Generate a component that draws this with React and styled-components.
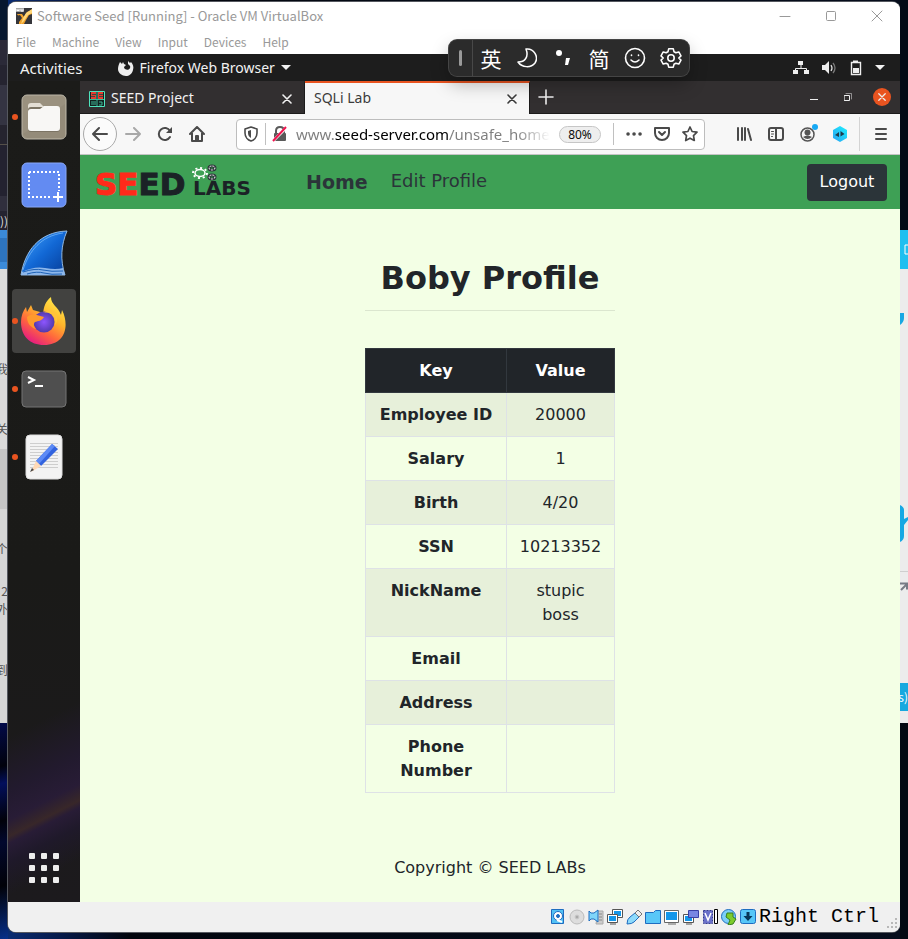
import React from "react";
import styled, { createGlobalStyle } from "styled-components";

const ui = '"Noto Sans", "Open Sans", sans-serif';
const cjk = '"Noto Sans CJK SC", sans-serif';

const Global = createGlobalStyle`
  * { box-sizing: border-box; }
  body { margin: 0; background: #030814; font-family: ${ui}; }
  button { border: 0; padding: 0; margin: 0; background: none; color: inherit; font: inherit; cursor: pointer; }
  svg { display: block; flex: none; }
`;

/* ---------- desktop behind the window ---------- */

const Desktop = styled.div`
  display: grid;
  grid-template-columns: 8px minmax(0, 1fr) 8px;
  min-height: 100vh;
  overflow: hidden;
  background: linear-gradient(90deg, #0b2f78 0, #061a4a 60px, #02050d 130px, #040b18 60%, #060d1c);
`;

const Strip = styled.div`
  display: flex;
  flex-direction: column;
  overflow: hidden;
  width: 8px;
`;

const Slab = styled.div`
  flex: ${(p) => (p.$h ? "none" : "1")};
  height: ${(p) => (p.$h ? `${p.$h}px` : "auto")};
  background: ${(p) => p.$bg};
  color: ${(p) => p.$fg || "#555"};
  display: flex;
  align-items: center;
  justify-content: ${(p) => (p.$start ? "flex-start" : "flex-end")};
  font: 12px/20px ${cjk};
  overflow: hidden;
`;

/* ---------- virtual machine window ---------- */

const Window = styled.div`
  display: flex;
  flex-direction: column;
  min-width: 0;
  margin: 2px 0 7px;
  border-radius: 8px;
  overflow: hidden;
  background: #f0f0f0;
  box-shadow: 0 0 0 1px #55585f;
`;

const TitleBar = styled.header`
  display: flex;
  align-items: center;
  height: 28px;
  padding: 0 16px 0 8px;
  background: #fff;
  color: #999;
`;

const Title = styled.span`
  flex: 1;
  margin-left: 5px;
  font: 13px/20px ${cjk};
  white-space: nowrap;
`;

const CaptionButtons = styled.div`
  display: flex;
  gap: 31px;
  color: #999;
`;

const MenuBar = styled.nav`
  display: flex;
  align-items: center;
  gap: 16px;
  height: 24px;
  padding: 0 8px;
  background: #fff;
  color: #999;
  font: 12px/20px ${cjk};
`;

const GnomeBar = styled.div`
  display: flex;
  align-items: center;
  height: 27px;
  padding: 0 15px 0 12px;
  background: #1d1d1d;
  color: #f2f2f2;
  font-size: 15px;
`;

const AppMenu = styled.button`
  display: flex;
  align-items: center;
  gap: 6px;
  margin-left: 35px;
  font-size: 14px;
  white-space: nowrap;
`;

const Tray = styled.button`
  display: flex;
  align-items: center;
  gap: 12px;
  margin-left: auto;
`;

const Guest = styled.div`
  display: flex;
  flex: 1;
  min-height: 0;
`;

const Dock = styled.aside`
  display: flex;
  flex-direction: column;
  gap: 4px;
  flex: none;
  width: 72px;
  padding: 4px 4px 2px;
  background:
    linear-gradient(153deg, #1c1a1d00 15%, #221a2e 38%, #281c36 50%, #33242c 55%, #382729 57%, #281c36 60%, #1f192a 68%, #1b1b1c00 82%) bottom / 72px 200px no-repeat,
    linear-gradient(#1b1b19, #1a1a18 60%, #1c1a1d);
`;

const DockItem = styled.button`
  position: relative;
  display: grid;
  place-items: center;
  width: 64px;
  height: 64px;
  border-radius: 4px;
  background: ${(p) => (p.$active ? "#424240" : "none")};
  margin-top: ${(p) => (p.$last ? "auto" : "0")};

  &::before {
    content: "";
    display: ${(p) => (p.$running ? "block" : "none")};
    position: absolute;
    left: 0;
    top: 29px;
    width: 6px;
    height: 6px;
    border-radius: 50%;
    background: #e95420;
  }
`;

/* ---------- browser ---------- */

const Browser = styled.div`
  display: flex;
  flex-direction: column;
  flex: 1;
  min-width: 0;
`;

const TabStrip = styled.div`
  display: flex;
  height: 33px;
  background: #322f30;
  color: #eee;
  border-bottom: 1px solid #1c1b1b;
`;

const Tab = styled.div`
  display: flex;
  align-items: center;
  flex: 0 1 225px;
  height: 33px;
  padding: 0 12px 0 9px;
  gap: 6px;
  font-size: 14px;
  white-space: nowrap;
  border-top: 2px solid ${(p) => (p.$active ? "#e95420" : "transparent")};
  border-right: 1px solid #1c1b1b;
  background: ${(p) => (p.$active ? "#f7f7f7" : "transparent")};
  color: ${(p) => (p.$active ? "#3b3b3b" : "#f2f2f2")};
`;

const TabLabel = styled.span`
  flex: 1;
  padding-bottom: 2px;
`;

const NewTab = styled.button`
  display: grid;
  place-items: center;
  width: 32px;
`;

const FrameButtons = styled.div`
  display: flex;
  align-items: center;
  gap: 16px;
  margin-left: auto;
  padding-right: 9px;
`;

const FrameButton = styled.button`
  display: grid;
  place-items: center;
  width: 18px;
  height: 18px;
  border-radius: 50%;
  background: ${(p) => (p.$close ? "#e95420" : "none")};
`;

const Toolbar = styled.div`
  display: flex;
  align-items: center;
  height: 41px;
  padding: 0 3px;
  background: #f7f7f7;
  border-bottom: 1px solid #c4c4c4;
  color: #4a4a4a;
`;

const Tool = styled.button`
  display: grid;
  place-items: center;
  flex: none;
  width: 32px;
  height: 32px;
  opacity: ${(p) => (p.$dim ? 0.45 : 1)};
`;

const BackTool = styled(Tool)`
  width: 34px;
  height: 34px;
  border: 1px solid #a9a9a9;
  border-radius: 50%;
  background: #fbfbfb;
`;

const ToolDivider = styled.span`
  flex: none;
  width: 1px;
  height: 34px;
  margin: 0 5px 0 3px;
  background: #d4d4d4;
`;

const AddressBar = styled.div`
  display: flex;
  align-items: center;
  flex: 1;
  min-width: 0;
  height: 31px;
  margin: 0 23px;
  background: #fff;
  border: 1px solid #bdbdbd;
  border-radius: 4px;
`;

const AddressButton = styled.button`
  display: grid;
  place-items: center;
  flex: none;
  width: 28px;
  height: 28px;
`;

const AddressDivider = styled.span`
  flex: none;
  width: 1px;
  height: 22px;
  margin-right: ${(p) => p.$after || 0}px;
  background: #c0c0c0;
`;

const Address = styled.input`
  flex: 1;
  min-width: 0;
  height: 26px;
  margin-left: 2px;
  padding: 0;
  border: 0;
  outline: 0;
  font: 15px ${ui};
  color: transparent;
  background: linear-gradient(90deg, #7d7d7d 39px, #000 39px, #000 152px, #7d7d7d 152px, #7d7d7d 220px, #7d7d7d00 100%);
  background-clip: text;
  -webkit-background-clip: text;
`;

const Zoom = styled.button`
  flex: none;
  width: 42px;
  height: 17px;
  margin: 0 12px 0 9px;
  border: 1px solid #c6c6c6;
  border-radius: 9px;
  background: #eee;
  color: #0c0c0c;
  font-size: 12px;
  line-height: 15px;
`;

/* ---------- web page ---------- */

const Page = styled.div`
  display: flex;
  flex-direction: column;
  flex: 1;
  background: #f3ffe5;
  color: #212529;
  font: 16px/24px "DejaVu Sans", sans-serif;
`;

const NavBar = styled.nav`
  display: flex;
  align-items: center;
  height: 54px;
  padding: 0 13px 0 15px;
  background: #3ea055;
`;

const Brand = styled.a`
  display: block;
  margin-right: 50px;
`;

const NavLink = styled.a`
  margin-right: 23px;
  padding-bottom: ${(p) => (p.$current ? 0 : 2)}px;
  color: #2b3439;
  font-size: ${(p) => (p.$current ? 19 : 18)}px;
  font-weight: ${(p) => (p.$current ? 700 : 400)};
  text-decoration: none;
  white-space: nowrap;
`;

const Logout = styled.button`
  height: 37px;
  min-width: 80px;
  margin-left: auto;
  padding: 0 12px;
  border-radius: 4px;
  background: #2b3439;
  color: #fff;
`;

const Profile = styled.main`
  display: flex;
  flex-direction: column;
  flex: 1;
  align-items: center;
  padding-top: 48px;
`;

const Heading = styled.h1`
  width: 250px;
  margin: 0 0 37px;
  padding-bottom: 10px;
  border-bottom: 1px solid #dbe6cf;
  font-size: 32px;
  line-height: 43px;
  text-align: center;
  white-space: nowrap;
`;

const DataTable = styled.table`
  width: 250px;
  table-layout: fixed;
  border-collapse: collapse;
  text-align: center;

  th, td {
    padding: 10px 12px 9px;
    border: 1px solid #dee2e6;
    vertical-align: top;
  }
  thead th {
    background: #212529;
    border-color: #32383e;
    color: #fff;
  }
  thead th:first-child { width: 141px; }
  tbody tr:nth-child(odd) { background: #e7f0da; }
`;

const Copyright = styled.footer`
  margin-top: auto;
  padding-bottom: 22px;
  text-align: center;
`;

/* ---------- status bar and input bar ---------- */

const StatusBar = styled.footer`
  display: flex;
  align-items: center;
  justify-content: flex-end;
  gap: 3px;
  height: 30px;
  background: #f0f0f0;
`;

const HostKey = styled.span`
  font: 20px/28px "Liberation Mono", monospace;
  color: #000;
`;

const ImeBar = styled.div`
  position: absolute;
  z-index: 2;
  top: 40px;
  left: 449px;
  display: flex;
  align-items: center;
  width: 240px;
  height: 36px;
  border-radius: 8px;
  background: #2b2b2b;
  box-shadow: 0 0 0 1px #454545, 0 8px 18px rgba(0, 0, 0, 0.28);
  color: #fff;
`;

const ImeGrip = styled.span`
  display: grid;
  place-items: center;
  width: 24px;
  height: 36px;
  border-right: 1px solid #484848;

  &::before {
    content: "";
    width: 3px;
    height: 16px;
    border-radius: 2px;
    background: #9a9a9a;
  }
`;

const ImeKey = styled.button`
  display: grid;
  place-items: center;
  width: 36px;
  height: 36px;
  font: 21px/34px ${cjk};
`;

/* ---------- icons ---------- */

const Line = ({ size = 16, width = 2, children, box = 16 }) => (
  <svg width={size} height={size} viewBox={`0 0 ${box} ${box}`} fill="none" stroke="currentColor" strokeWidth={width} strokeLinecap="round" strokeLinejoin="round" aria-hidden="true">
    {children}
  </svg>
);

const Cross = ({ size = 10, width = 1.6 }) => (
  <Line size={size} box={10} width={width}><path d="M1 1l8 8M9 1L1 9" /></Line>
);

const Caret = () => (
  <svg width="10" height="5" viewBox="0 0 10 5" fill="currentColor" aria-hidden="true"><path d="M0 0h10L5 5z" /></svg>
);

const VmIcon = () => (
  <svg width="16" height="16" viewBox="0 0 16 16" aria-hidden="true">
    <path d="M0 0h16v16H0z" fill="#35353a" />
    <path d="M1 6h5l2 3 3-5 5-2v4l-3 1-3 5-2 4H3V9z" fill="#f0a22c" />
    <path d="M10 5l6-4v4l-4 2-4 6-3 3 2-6z" fill="#ffd778" />
    <path d="M0 8l4-1 2 3-3 4-3 1z" fill="#35353a" />
    <path d="M0 0h8v4H0z" fill="#a6a6a6" />
    <path d="M1 1v2l1-1 1 1V1m2 0v2h2V1" stroke="#fff" fill="none" />
  </svg>
);

const FirefoxMono = () => (
  <svg width="16" height="16" viewBox="0 0 16 16" aria-hidden="true">
    <path fill="#eee" d="M2 2l2 2 1-2 1 2 2 1-2 2c0 3 5 4 6 1 1-2-1-3-2-4V1l2 2 1-1c2 2 3 5 2 8-1 4-4 6-7 6-4 0-8-3-8-7 0-3 1-5 2-7z" />
  </svg>
);

const NetworkIcon = () => (
  <svg width="16" height="14" viewBox="0 0 16 14" aria-hidden="true">
    <path d="M8 3v5M2.500 11V7.500h11V11" fill="none" stroke="#eee" />
    <path fill="#eee" d="M5 0h5v4H5zM0 9h5v4H0zM11 9h5v4h-5z" />
  </svg>
);

const SoundIcon = () => (
  <svg width="16" height="14" viewBox="0 0 16 14" aria-hidden="true">
    <path fill="#eee" d="M1 4h3l4-4v13L4 9H1z" />
    <path d="M10 4q2 3 0 6" fill="none" stroke="#ddd" strokeWidth="1.300" />
    <path d="M12 2q4 5 0 10" fill="none" stroke="#777" strokeWidth="1.300" />
  </svg>
);

const BatteryIcon = () => (
  <svg width="14" height="16" viewBox="0 0 14 16" aria-hidden="true">
    <path d="M4 .5h5v2H4z" fill="#eee" />
    <path d="M2.500 2.500h9v12h-9z" fill="none" stroke="#eee" strokeWidth="1.400" />
    <path d="M4 8h6v5H4z" fill="#eee" />
  </svg>
);

const FilesIcon = () => (
  <svg width="46" height="46" viewBox="0 0 46 46" aria-hidden="true">
    <rect x="1" y="1" width="44" height="44" rx="5" fill="#9a917f" stroke="#bbb5a7" />
    <path d="M2 40L44 10v34H6z" fill="#8b8270" opacity=".4" />
    <path d="M7 12q0-3 3-3h9l4 4h12v10H7z" fill="#e3ded4" />
    <rect x="7" y="13" width="32" height="25" rx="3" fill="#7c7464" />
    <path d="M7 18q0-3 3-3h9l4-3h13q3 0 3 3v19q0 3-3 3H10q-3 0-3-3z" fill="#f8f7f5" />
  </svg>
);

const ScreenshotIcon = () => (
  <svg width="46" height="46" viewBox="0 0 46 46" aria-hidden="true">
    <rect x="1" y="1" width="44" height="44" rx="5" fill="#638bf2" stroke="#88a7f8" />
    <path d="M8 10h30v19M8 10v25h22" fill="none" stroke="#fff" strokeWidth="2" strokeDasharray="2 2" />
    <path d="M37 30v10M32 35h10" stroke="#fff" strokeWidth="2" />
  </svg>
);

const SharkIcon = () => (
  <svg width="48" height="48" viewBox="0 0 48 48" aria-hidden="true">
    <defs>
      <linearGradient id="fin" x1="0" y1="0" x2="1" y2="1">
        <stop offset="0" stopColor="#45a5ff" /><stop offset=".5" stopColor="#1268d5" /><stop offset="1" stopColor="#053a94" />
      </linearGradient>
    </defs>
    <path d="M1 46C5 22 19 3 47 2c-6 14-7 29-2 44z" fill="url(#fin)" stroke="#92b8df" strokeWidth="1" />
    <path d="M3 41C9 22 21 7 43 4" stroke="#8cc8ff" fill="none" opacity=".6" />
    <path d="M2 43q12-6 23-4t18 0l2 7H1z" fill="#8db7eb" />
    <path d="M3 43q12-4 20-2t20 1M7 45q10-3 17-1t18 1" stroke="#1e62b6" fill="none" />
  </svg>
);

const FirefoxIcon = () => (
  <svg width="46" height="48" viewBox="0 0 46 48" aria-hidden="true">
    <defs>
      <linearGradient id="flame" x1=".85" y1="0" x2=".25" y2="1">
        <stop offset="0" stopColor="#fff14f" /><stop offset=".4" stopColor="#ffb52b" /><stop offset=".68" stopColor="#ff663d" /><stop offset="1" stopColor="#e31587" />
      </linearGradient>
      <radialGradient id="globe"><stop offset="0" stopColor="#8d55ff" /><stop offset="1" stopColor="#523aad" /></radialGradient>
    </defs>
    <path d="M5 10l1 5 4-7 2 5 7 2 3 2c1-8 2-12 8-17 0 8 7 9 10 18l1-5c8 16 3 35-18 35C9 48 0 39 0 25c0-6 2-11 5-15z" fill="url(#flame)" />
    <circle cx="23" cy="25" r="10.500" fill="url(#globe)" />
    <path d="M6 20c6-5 11-1 17 0-2 4-6 4-9 5-2 2-1 5 1 7-5-1-9-6-9-12z" fill="#ff9a2d" />
    <path d="M22 16c8-2 14 4 12 12 5-6 2-15-6-15z" fill="#ffc439" />
  </svg>
);

const TerminalIcon = () => (
  <svg width="46" height="38" viewBox="0 0 46 38" aria-hidden="true">
    <rect x="1" y="1" width="44" height="36" rx="4" fill="#4f4f4f" stroke="#747474" />
    <path d="M7 7l6 3-6 3M14 16h8" fill="none" stroke="#fff" strokeWidth="2" />
  </svg>
);

const EditorIcon = () => (
  <svg width="38" height="46" viewBox="0 0 38 46" aria-hidden="true">
    <rect x="1" y="1" width="36" height="44" rx="4" fill="#f3f3f3" stroke="#ddd" />
    <path d="M5 9.500h28M5 12.500h28M5 15.500h28M5 18.500h28M5 21.500h28M5 24.500h28M5 27.500h28M5 30.500h28M5 33.500h28" stroke="#cecece" />
    <path d="M11 27L27 10l6 5-17 17z" fill="#3263df" />
    <path d="M11 27L27 10l3 2-16 18z" fill="#5c8af6" />
    <path d="M11 27l5 5-10 6z" fill="#ffd9b6" />
    <path d="M7 34l2 2-4 2z" fill="#444" />
  </svg>
);

const AppsIcon = () => (
  <svg width="30" height="30" viewBox="0 0 30 30" fill="#eee" aria-hidden="true">
    {[0, 12, 24].map((y) => [0, 12, 24].map((x) => <rect key={`${x}-${y}`} x={x} y={y} width="6" height="6" rx="1" />))}
  </svg>
);

const SeedFavicon = () => (
  <svg width="16" height="16" viewBox="0 0 16 16" aria-hidden="true">
    <path d="M0 0h16v16H0z" fill="#12211f" />
    <path d="M2 1h5v7H2zM9 1h5v7H9z" fill="#e5392f" />
    <path d="M.5.500h15v15H.5z" fill="none" stroke="#4fe3bd" />
    <path d="M1 8.500h14M8 1v14M2 11h5M2 13h5M10 11h3v3h-3" fill="none" stroke="#3fb797" />
    <path d="M3 3.500h4M2 5.500h4M10 3.500h4M10 5.500h4" stroke="#3b4a3d" />
  </svg>
);

const Shield = () => (
  <Line width={1.6}><path d="M8 1l6 2v4c0 4-3 7-6 8-3-1-6-4-6-8V3z" /><path d="M8 4v8c-2-1-3-3-3-5V5z" fill="currentColor" stroke="none" /></Line>
);

const BrokenLock = () => (
  <svg width="16" height="16" viewBox="0 0 16 16" aria-hidden="true">
    <path d="M4 8V5q0-4 4-4t4 4v3" fill="none" stroke="#5a5a5a" strokeWidth="2" />
    <rect x="2" y="7" width="12" height="8" rx="1" fill="#5a5a5a" />
    <path d="M0 14L14 0l2 2L2 16z" fill="#fff" />
    <path d="M1 15L14 1" stroke="#f0144e" strokeWidth="2" />
  </svg>
);

const Account = () => (
  <svg width="20" height="20" viewBox="0 0 20 20" aria-hidden="true">
    <circle cx="9.500" cy="10.500" r="6.500" fill="none" stroke="#555" strokeWidth="1.500" />
    <circle cx="9.500" cy="8.500" r="3" fill="#555" />
    <path d="M5 13q4.500-3 9 0-4.500 4-9 0z" fill="#555" />
    <circle cx="17" cy="3" r="3" fill="#16a9f5" />
  </svg>
);

const Hexagon = () => (
  <svg width="16" height="16" viewBox="0 0 16 16" aria-hidden="true">
    <defs><linearGradient id="hex" x1="1" y1="0" x2="0" y2="1"><stop offset="0" stopColor="#1df0ff" /><stop offset="1" stopColor="#27a3f2" /></linearGradient></defs>
    <path d="M8 0l7 4v8l-7 4-7-4V4z" fill="url(#hex)" />
    <path d="M3 9l4-3v5zM8.500 5l4 3-4 2.500z" fill="#1f3d4d" />
  </svg>
);

const SeedLogo = () => (
  <svg width="161" height="38" viewBox="0 0 161 38" role="img" aria-label="SEED LABS">
    <g fontFamily="DejaVu Sans" fontWeight="700">
      <text x="0" y="32" fontSize="31" fill="#1b2226" stroke="#1b2226" strokeWidth="1"><tspan fill="#ff2a1a" stroke="#ff2a1a">SE</tspan>ED</text>
      <text x="98" y="32" fontSize="20" fill="#1b2226">LABS</text>
    </g>
    <g fill="none" stroke="#fff">
      <ellipse cx="105" cy="10" rx="5" ry="3.500" strokeWidth="1.500" />
      <ellipse cx="105" cy="10" rx="7" ry="5" strokeWidth="2" strokeDasharray="2 2.700" />
      <g strokeWidth="3" stroke="#2b3439">
        <ellipse cx="117" cy="5" rx="3" ry="2" />
        <ellipse cx="117" cy="14" rx="3" ry="2" />
      </g>
      <ellipse cx="117" cy="5" rx="3" ry="2" strokeDasharray="2 1" />
      <ellipse cx="117" cy="14" rx="3" ry="2" strokeDasharray="2 1" />
    </g>
  </svg>
);

const Device = ({ children }) => (
  <svg width="16" height="16" viewBox="0 0 16 16" stroke="#1e6cc0" strokeWidth="1" aria-hidden="true">{children}</svg>
);

const DeviceIcons = () => (
  <>
    <Device><path d="M1.500.500h12v14h-12z" fill="#52c1f5" /><circle cx="8" cy="7" r="4.500" fill="#fff" /><circle cx="8" cy="7" r="1.500" fill="#1e6cc0" /><path d="M7 11l5 2" stroke="#fff" strokeWidth="2" /></Device>
    <Device><circle cx="8" cy="8" r="7" fill="#ddd" stroke="#bbb" /><circle cx="8" cy="8" r="2" fill="#aaa" stroke="#ccc" /></Device>
    <Device><path d="M10 2h5v13H8z" fill="#ccc" stroke="#aaa" /><path d="M1 2l2 2h3l4-3v12l-4-3H3l-2 2z" fill="#7fd5fa" /><path d="M11 5h3M11 8h3M11 11h3" stroke="#888" /></Device>
    <Device><path d="M5.500.500h10v8h-10z" fill="#fff" stroke="#555" /><path d="M7 2h7v5H7z" fill="#1497ea" stroke="none" /><path d="M.5 5.500h10v8H.5z" fill="#fff" stroke="#555" /><path d="M2 7h7v5H2z" fill="#1497ea" stroke="none" /><path d="M3 15h6" stroke="#555" /></Device>
    <Device><path d="M1 15q0-5 3-7l5-4 4 4-5 5q-2 2-7 2z" fill="#8ddafb" /><path d="M9 4l3-3 4 4-3 3z" fill="#eee" stroke="#777" /></Device>
    <Device><path d="M.5 3.500h8l2-2h5v13H.5z" fill="#59c7f8" /></Device>
    <Device><path d="M.5 1.500h14v12H.5z" fill="#fff" stroke="#666" /><path d="M2 3h11v8H2z" fill="#1497ea" stroke="none" /><path d="M4 15h8" stroke="#666" /></Device>
    <Device><path d="M.5 5.500h10v8H.5z" fill="#fff" stroke="#555" /><path d="M2 7h7v5H2z" fill="#1497ea" stroke="none" /><path d="M5.500 1.500h10v7h-10z" fill="#7786e2" stroke="#3940a5" /><path d="M3 15h6" stroke="#555" /></Device>
    <Device><path d="M1.500 1.500h9v13h-9z" fill="#6970c9" stroke="#343b91" strokeDasharray="2 1" /><path d="M3 4l3 7 3-7" fill="none" stroke="#fff" strokeWidth="1.500" /><path d="M12.500.5h3v14h-3z" fill="#fff" stroke="#000" /></Device>
    <Device><circle cx="7.500" cy="7.500" r="7" fill="#7ccff8" /><path d="M6 4h6v4l3 2-3 5-5 1 2-5-4-3z" fill="#7ccc2c" stroke="#367e20" /></Device>
    <Device><rect x=".5" y=".5" width="15" height="14" rx="2" fill="#56c6f8" /><path d="M6.500 3h3v4h3L8 12 3.500 7h3z" fill="#063659" stroke="none" /></Device>
  </>
);

const rows = [
  ["Employee ID", "20000"],
  ["Salary", "1"],
  ["Birth", "4/20"],
  ["SSN", "10213352"],
  ["NickName", "stupic boss"],
  ["Email", ""],
  ["Address", ""],
  ["Phone Number", ""],
];

const apps = [
  ["Files", FilesIcon, true],
  ["Screenshot", ScreenshotIcon, false],
  ["Wireshark", SharkIcon, false],
  ["Firefox", FirefoxIcon, true],
  ["Terminal", TerminalIcon, true],
  ["Text Editor", EditorIcon, true],
];

const leftSlabs = [
  [40, "#07172f"], [25, "#2b2a38"], [20, "#252430"], [40, "#343442"], [19, "#25242f"], [1, "#555049"],
  [51, "#232230"], [15, "#302f3d"], [19, "#242330", "))", "#ddd"], [8, "#3b8ad8"], [24, "#2e74be"], [7, "#3b8ad8"],
  [90, "#dcdcdc"], [20, "#dcdcdc", "我"], [40, "#dadada"], [20, "#dadada", "关"], [10, "#dadada"], [60, "#c6c6c6"],
  [30, "#d6d6d6"], [20, "#d6d6d6", "个"], [22, "#d6d6d6"], [20, "#d6d6d6", "2"], [16, "#d6d6d6", "外"],
  [43, "#d6d6d6"], [20, "#d6d6d6", "到"], [43, "#d6d6d6"],
  [0, "linear-gradient(165deg, #020a4a, #01020c 20%, #030f5c 28%, #01020a 45%, #02082e 55%, #010208 75%, #08308a)"],
];

function LeftStrip() {
  return (
    <Strip aria-hidden="true">
      {leftSlabs.map(([h, bg, text, fg], i) => <Slab key={i} $h={h} $bg={bg} $fg={fg}>{text}</Slab>)}
    </Strip>
  );
}

function RightStrip() {
  return (
    <Strip aria-hidden="true">
      <Slab $h={230} $bg="#040a16" />
      <Slab $h={39} $bg="#20bff0"><svg width="4" height="12" viewBox="0 0 4 12"><path d="M5 1H1v9h4" fill="none" stroke="#fff" /></svg></Slab>
      <Slab $h={44} $bg="#ececec" />
      <Slab $h={12} $bg="#ececec" $start><svg width="8" height="12" viewBox="0 0 8 12"><path d="M0 0h4v5q0 4-4 7z" fill="#17a8e3" /></svg></Slab>
      <Slab $h={180} $bg="#ececec" />
      <Slab $h={37} $bg="#ececec" $start><svg width="8" height="37" viewBox="0 0 8 37"><path d="M0 0q4 2 4 5v9l4-2v3l-4 5v11q0 4-4 6z" fill="#17a8e3" /></svg></Slab>
      <Slab $h={29} $bg="#ececec" />
      <Slab $h={1} $bg="#cfcfcf" />
      <Slab $h={10} $bg="#ececec" />
      <Slab $h={10} $bg="#ececec"><svg width="8" height="10" viewBox="0 0 8 10"><path d="M0 1.500h7v6M7 2L1 8" fill="none" stroke="#777b85" strokeWidth="2" /></svg></Slab>
      <Slab $h={91} $bg="#ececec" />
      <Slab $h={28} $bg="#18a8df" $fg="#fff">s)</Slab>
      <Slab $h={12} $bg="#ececec" />
      <Slab $bg="#030812" />
    </Strip>
  );
}

function InputBar() {
  return (
    <ImeBar role="toolbar" aria-label="Input method">
      <ImeGrip />
      <ImeKey>英</ImeKey>
      <ImeKey aria-label="Half width"><Line size={20} box={20} width={1.5}><path d="M9 1c8-1 13 8 9 14-4 5-13 5-17-1C8 14 12 9 9 1z" /></Line></ImeKey>
      <ImeKey aria-label="Punctuation"><svg width="16" height="18" viewBox="0 0 16 18" fill="#fff"><circle cx="4" cy="4" r="3" /><path d="M11 9h4l-2 7h-3z" /></svg></ImeKey>
      <ImeKey>简</ImeKey>
      <ImeKey aria-label="Emoji"><Line size={22} box={22} width={1.6}><circle cx="11" cy="11" r="9.500" /><path d="M7 13q4 4 8 0M7.500 8v.5M14.500 8v.5" /></Line></ImeKey>
      <ImeKey aria-label="Settings">
        <Line size={22} box={24} width={1.7}>
          <circle cx="12" cy="12" r="3.500" />
          <path d="M9.500 2h5l.8 3.200 2 1.100 3.200-.9 2.400 4.300L20.500 12l2.400 2.300-2.400 4.300-3.200-.9-2 1.100-.8 3.200h-5l-.8-3.200-2-1.100-3.200.9-2.400-4.300L3.500 12 1.100 9.700l2.400-4.300 3.200.9 2-1.100z" />
        </Line>
      </ImeKey>
    </ImeBar>
  );
}

function BrowserToolbar() {
  return (
    <Toolbar>
      <BackTool aria-label="Back"><Line><path d="M15 8H1M7 2L1 8l6 6" /></Line></BackTool>
      <Tool $dim aria-label="Forward"><Line><path d="M1 8h14M9 2l6 6-6 6" /></Line></Tool>
      <Tool aria-label="Reload"><Line><path d="M13 11a6 6 0 1 1 0-6" /><path d="M15 1v6H9z" fill="currentColor" stroke="none" /></Line></Tool>
      <Tool aria-label="Home"><Line><path d="M1 8l7-7 7 7M3 7v8h10V7" /><path d="M7 14v-4h2v4" /></Line></Tool>
      <AddressBar>
        <AddressButton aria-label="Tracking protection"><Shield /></AddressButton>
        <AddressDivider />
        <AddressButton aria-label="Connection not secure"><BrokenLock /></AddressButton>
        <Address aria-label="Address" defaultValue="www.seed-server.com/unsafe_home.php" />
        <Zoom>80%</Zoom>
        <AddressDivider $after={6} />
        <AddressButton aria-label="Page actions"><Line><path d="M2 8h.1M8 8h.1M14 8h.1" strokeWidth="3.500" /></Line></AddressButton>
        <AddressButton aria-label="Save to Pocket"><Line><path d="M1 2h14v5a7 7 0 0 1-14 0zM5 6l3 3 3-3" /></Line></AddressButton>
        <AddressButton aria-label="Bookmark"><Line width={1.7}><path d="M8 1l2.100 4.500 4.900.7-3.500 3.400.8 4.900L8 12.200l-4.300 2.300.8-4.900L1 6.200l4.900-.7z" /></Line></AddressButton>
      </AddressBar>
      <Tool aria-label="Library"><Line><path d="M2 2v12M6 2v12M9 2v12M12 3l3 11" /></Line></Tool>
      <Tool aria-label="Sidebars"><Line><rect x="1" y="2" width="14" height="12" rx="2" /><path d="M8 2v12" /><path d="M3.500 5.500h2M3.500 8h2M3.500 10.500h1" strokeWidth="1" /></Line></Tool>
      <Tool aria-label="Account"><Account /></Tool>
      <Tool aria-label="Extension"><Hexagon /></Tool>
      <ToolDivider />
      <Tool aria-label="Menu"><Line box={16}><path d="M3 3h10M3 8h10M3 13h10" /></Line></Tool>
    </Toolbar>
  );
}

function WebPage() {
  return (
    <Page>
      <NavBar>
        <Brand href="#"><SeedLogo /></Brand>
        <NavLink href="#" $current>Home</NavLink>
        <NavLink href="#">Edit Profile</NavLink>
        <Logout>Logout</Logout>
      </NavBar>
      <Profile>
        <Heading>Boby Profile</Heading>
        <DataTable>
          <thead><tr><th scope="col">Key</th><th scope="col">Value</th></tr></thead>
          <tbody>
            {rows.map(([key, value]) => <tr key={key}><th scope="row">{key}</th><td>{value}</td></tr>)}
          </tbody>
        </DataTable>
      </Profile>
      <Copyright>Copyright © SEED LABs</Copyright>
    </Page>
  );
}

export default function App() {
  return (
    <>
      <Global />
      <Desktop>
        <LeftStrip />
        <Window>
          <TitleBar>
            <VmIcon />
            <Title>Software Seed [Running] - Oracle VM VirtualBox</Title>
            <CaptionButtons>
              <button aria-label="Minimize"><Line width={1} size={15} box={15}><path d="M3 7.500h10" /></Line></button>
              <button aria-label="Maximize"><Line width={1} size={15} box={15}><rect x="3.500" y="2.500" width="9" height="9" rx="1" /></Line></button>
              <button aria-label="Close"><Line width={1} size={15} box={15}><path d="M3 2l10 10M13 2L3 12" /></Line></button>
            </CaptionButtons>
          </TitleBar>
          <MenuBar>
            {["File", "Machine", "View", "Input", "Devices", "Help"].map((m) => <button key={m}>{m}</button>)}
          </MenuBar>
          <GnomeBar>
            <button>Activities</button>
            <AppMenu><FirefoxMono /><span>Firefox Web Browser</span><Caret /></AppMenu>
            <Tray aria-label="System menu"><NetworkIcon /><SoundIcon /><BatteryIcon /><Caret /></Tray>
          </GnomeBar>
          <Guest>
            <Dock>
              {apps.map(([name, Icon, running]) => (
                <DockItem key={name} aria-label={name} $running={running} $active={name === "Firefox"}><Icon /></DockItem>
              ))}
              <DockItem $last aria-label="Show applications"><AppsIcon /></DockItem>
            </Dock>
            <Browser>
              <TabStrip>
                <Tab><SeedFavicon /><TabLabel>SEED Project</TabLabel><button aria-label="Close tab"><Cross /></button></Tab>
                <Tab $active><TabLabel>SQLi Lab</TabLabel><button aria-label="Close tab"><Cross /></button></Tab>
                <NewTab aria-label="New tab"><Line width={1.6}><path d="M8 1v14M1 8h14" /></Line></NewTab>
                <FrameButtons>
                  <FrameButton aria-label="Minimize"><Line size={8} box={8} width={1}><path d="M0 6.500h8" /></Line></FrameButton>
                  <FrameButton aria-label="Restore"><Line size={8} box={8} width={1}><path d="M.5 2.500h5v5h-5z" /><path d="M2 .5h5.500V6" opacity=".5" /></Line></FrameButton>
                  <FrameButton $close aria-label="Close"><Cross size={8} /></FrameButton>
                </FrameButtons>
              </TabStrip>
              <BrowserToolbar />
              <WebPage />
            </Browser>
          </Guest>
          <StatusBar>
            <DeviceIcons />
            <HostKey>Right Ctrl</HostKey>
            <svg width="18" height="26" viewBox="0 0 18 26" fill="#b8b8b8" aria-hidden="true"><path d="M13 14h2v2h-2zM9 18h2v2H9zM13 18h2v2h-2zM5 22h2v2H5zM9 22h2v2H9zM13 22h2v2h-2z" /></svg>
          </StatusBar>
        </Window>
        <RightStrip />
      </Desktop>
      <InputBar />
    </>
  );
}
